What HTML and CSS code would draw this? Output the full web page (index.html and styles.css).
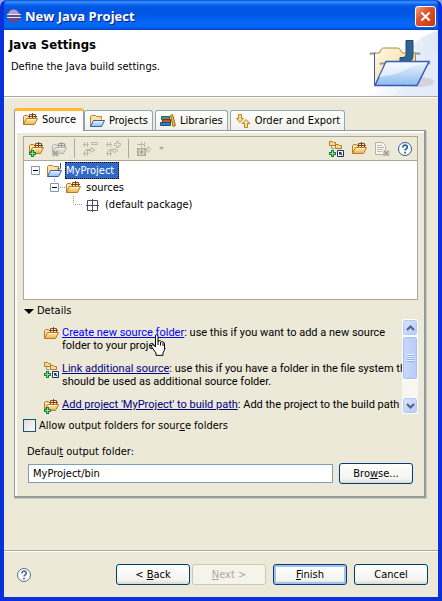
FILE: index.html
```
<!DOCTYPE html>
<html lang="en">
<head>
    <meta charset="UTF-8">
    <meta name="viewport" content="width=device-width, initial-scale=1.0">
    <title>New Java Project</title>
    <link rel="stylesheet" href="styles.css">
</head>
<body>
    <!-- Shared icons -->
    <svg class="defs" aria-hidden="true">
        <defs>
            <linearGradient id="gold" x1="0" y1="0" x2="0" y2="1">
                <stop offset="0" stop-color="#fff0c0"/>
                <stop offset="1" stop-color="#f0b040"/>
            </linearGradient>
            <linearGradient id="sky" x1="0" y1="0" x2="0" y2="1">
                <stop offset="0" stop-color="#eef6ff"/>
                <stop offset="1" stop-color="#8cbcf0"/>
            </linearGradient>
            <symbol id="i-package" viewBox="0 0 16 16">
                <path d="M1.500 12.500v-8l1-1h3l1 1h2v2" fill="#fbe3a6" stroke="#b9782a"/>
                <path d="M7.500 2.500h6v4h-6z" fill="#fbe3c0" stroke="#8a4a1c"/>
                <path d="M6 4.500h9M10.500 1v6" stroke="#7c3f10" fill="none"/>
                <path d="M1.500 12.500l3-6h11l-3 6z" fill="url(#gold)" stroke="#b9782a"/>
                <path d="M5.500 7.500h8" stroke="#fff4d0"/>
            </symbol>
            <symbol id="i-plus" viewBox="0 0 16 16">
                <path d="M3 9h3v2h2v3h-2v2h-3v-2h-2v-3h2z" fill="#16803a"/>
                <path d="M4.500 10v5M2 12.500h5" stroke="#8fe08f" fill="none"/>
            </symbol>
            <symbol id="i-package-add" viewBox="0 0 16 16">
                <use href="#i-package"/>
                <use href="#i-plus"/>
            </symbol>
            <symbol id="i-link" viewBox="0 0 16 16">
                <path d="M1.500 4.500v-4h3l1 1h2v3zM7.500 7.500v-4h3l1 1h2v3z" fill="#fbd98a" stroke="#b9782a"/>
                <path d="M3.500 5v2.500h3" stroke="#999" fill="none"/>
                <use href="#i-plus"/>
                <path d="M9.500 9.500h6v6h-6z" fill="#fff" stroke="#1c2f6b"/>
                <path d="M11 11h3l-1 1 1.500 1.500-1 1L12 13l-1 1z" fill="#1c2f6b"/>
            </symbol>
            <symbol id="i-folder" viewBox="0 0 16 16">
                <path d="M1.500 13.500v-10l1-1h4l1 1h5v3" fill="#fbe3a6" stroke="#b9862a"/>
                <path d="M1.500 13.500l3-6h11l-3 6z" fill="url(#sky)" stroke="#3a5fb0"/>
            </symbol>
            <symbol id="i-project" viewBox="0 0 16 16">
                <use href="#i-folder"/>
                <path d="M14.500 0v5q0 1-1 1h-2" stroke="#1d5c8c" fill="none"/>
            </symbol>
            <symbol id="i-help" viewBox="0 0 16 16">
                <circle cx="8" cy="8" r="6.500" fill="#fff" stroke="currentColor"/>
                <path d="M5.800 6.500q0-2.300 2.300-2.300t2.200 2q0 1-1.200 1.700-1 .6-1 1.600M8 10.800v1.700" fill="none" stroke="currentColor" stroke-width="1.700"/>
            </symbol>
        </defs>
    </svg>

    <div class="window">
        <div class="titlebar">
            <svg class="icon" viewBox="0 0 16 16">
                <circle cx="8" cy="8" r="7" fill="#5b4d8f"/>
                <path d="M2 6q2-5 6-4.500T13 6z" fill="#a79fd0"/>
                <path d="M1 6.500h14M1 9.500h14" stroke="#e8e8f8"/>
            </svg>
            <h1>New Java Project</h1>
            <button type="button" class="close" aria-label="Close">
                <svg viewBox="0 0 21 21"><path d="M6 6l9 9M15 6l-9 9" stroke="#fff" stroke-width="2.200"/></svg>
            </button>
        </div>

        <div class="banner">
            <div>
                <h2>Java Settings</h2>
                <p>Define the Java build settings.</p>
            </div>
            <svg class="banner-art" viewBox="0 0 75 66">
                <defs>
                    <linearGradient id="fade" x1="0" y1="0" x2="1" y2="0">
                        <stop offset="0" stop-color="#fff"/>
                        <stop offset="1" stop-color="#dfe7f7"/>
                    </linearGradient>
                    <linearGradient id="paper" x1="0" y1="0" x2="1" y2="1">
                        <stop offset="0" stop-color="#fffbe8"/>
                        <stop offset="1" stop-color="#efcf80"/>
                    </linearGradient>
                </defs>
                <path d="M75 1Q48 8 42 30Q36 55 0 66h75z" fill="url(#fade)"/>
                <path d="M75 22Q58 24 50 40T30 66h45z" fill="#e4ebf8" opacity=".6"/>
                <ellipse cx="56" cy="52" rx="15" ry="5" fill="#b9aebb" opacity=".4"/>
                <path d="M7 24.500l1-1h5M52 23.500h4l1 1" fill="none" stroke="#9a9a9a" stroke-width="2"/>
                <path d="M11.500 55v-32h5l2-4q1-1 2-1h14q2 0 3 2l2 3h13v14" fill="url(#paper)" stroke="#a8863c"/>
                <path d="M11.500 55v-32" stroke="#3d55a8"/>
                <path d="M43 10.500h7v15q0 6-5 6h-8v-4h3q3 0 3-3z" fill="#2f648f" stroke="#204a70"/>
                <path d="M17 34.500l1-1h5M62 33h4l1 1" fill="none" stroke="#9a9a9a" stroke-width="2"/>
                <path d="M12 55.500l11-24h43l-12 24z" fill="url(#sky)" stroke="#3a5ab8" stroke-width="1.500"/>
                <path d="M16 47l7-14h39q-12 2-20 7t-26 7z" fill="#fff" opacity=".55"/>
            </svg>
        </div>

        <div class="content">
            <div class="tabs" role="tablist">
                <button type="button" role="tab" class="tab active" aria-selected="true">
                    <svg class="icon"><use href="#i-package"/></svg>Source
                </button>
                <button type="button" role="tab" class="tab">
                    <svg class="icon"><use href="#i-folder"/></svg>Projects
                </button>
                <button type="button" role="tab" class="tab">
                    <svg class="icon" viewBox="0 0 16 16">
                        <path d="M1.500 3.500h8v3h-8z" fill="#3f9a8c" stroke="#1f6a60"/>
                        <path d="M2.500 6.500h8v3h-8z" fill="#c8502c" stroke="#8a3018"/>
                        <path d="M.5 9.500h10v3H.5z" fill="#3a7bb0" stroke="#1e4f7c"/>
                        <path d="M10.500 2.500l2-1 3 11-2.500 1z" fill="#f2b632" stroke="#a86c10"/>
                    </svg>Libraries
                </button>
                <button type="button" role="tab" class="tab">
                    <svg class="icon" viewBox="0 0 16 16">
                        <path d="M3.500 1.500h3v4h2l-3.500 4-3.500-4h2z" fill="#fbe08a" stroke="#b9822a"/>
                        <path d="M9.500 14.500h3v-4h2.500l-4-4-4 4h2.500z" fill="#fbe08a" stroke="#b9822a"/>
                    </svg>Order and Export
                </button>
            </div>

            <div class="panel">
                <div class="build-path">
                    <div class="toolbar">
                        <button type="button" aria-label="Create new source folder"><svg class="icon"><use href="#i-package-add"/></svg></button>
                        <button type="button" aria-label="Remove from build path" disabled>
                            <svg class="icon gray"><use href="#i-package"/><path d="M2 10l5 5M7 10l-5 5" stroke="#666" stroke-width="2"/></svg>
                        </button>
                        <span class="divider"></span>
                        <button type="button" aria-label="Exclude" disabled>
                            <svg class="icon" viewBox="0 0 16 16"><path d="M1 3.500h6M1 12.500h6M2.500 1v5M5.500 1v5M2.500 10v5M5.500 10v5M4 8.500h5v-2l4 2.500-4 2.500v-2H4zM9.500 1.500h6v2h-6z" fill="none" stroke="#bcb8a9"/></svg>
                        </button>
                        <button type="button" aria-label="Include" disabled>
                            <svg class="icon" viewBox="0 0 16 16"><path d="M1 3.500h6M1 12.500h6M2.500 1v5M5.500 1v5M2.500 10v5M5.500 10v5M4 8.500h5v-1l4 2-4 2.500v-2H4zM11.500.5h2v2h2v2h-2v2h-2v-2h-2v-2h2z" fill="none" stroke="#bcb8a9"/></svg>
                        </button>
                        <span class="divider"></span>
                        <button type="button" aria-label="Configure filters" disabled>
                            <svg class="icon" viewBox="0 0 16 16"><path d="M1 3.500h8M5.500 1v5M8.500 1v5M10 7.500h2v-2l3 3-3 3v-2h-2z" fill="none" stroke="#bcb8a9"/><path d="M1.500 7.500h8v7h-8z" fill="#dedbce" stroke="#aca899"/><path d="M2 8l7 6M9 8l-7 6M5.500 8v6M2 11h7" stroke="#8f8d80" stroke-dasharray="1 1"/></svg>
                        </button>
                        <button type="button" class="arrow" aria-label="Filter menu" disabled>
                            <svg viewBox="0 0 5 3"><path d="M0 0h5L2.500 3z" fill="#aca899"/></svg>
                        </button>
                        <div class="toolbar-right">
                            <button type="button" aria-label="Link source"><svg class="icon"><use href="#i-link"/></svg></button>
                            <button type="button" aria-label="Add package root"><svg class="icon"><use href="#i-package"/></svg></button>
                            <button type="button" aria-label="Edit" disabled>
                                <svg class="icon" viewBox="0 0 16 16"><path d="M1.500 1.500h7l3 3v9h-10z" fill="#f6f5f0" stroke="#b5b2a5"/><path d="M3 4.500h5M3 6.500h7M3 8.500h6M3 10.500h5" stroke="#c0bdb0"/><path d="M9 9.500h6.500v5.500H9z" fill="#c8c5b8"/><path d="M10 10l4.500 4.500M14.500 10L10 14.500" stroke="#888"/></svg>
                            </button>
                            <button type="button" class="help" aria-label="Help"><svg class="icon"><use href="#i-help"/></svg></button>
                        </div>
                    </div>

                    <ul class="tree">
                        <li>
                            <div class="row">
                                <svg class="toggle" viewBox="0 0 9 9"><path d="M.5.5h8v8h-8z" fill="#fff" stroke="#7b98b5"/><path d="M2 4.500h5" stroke="#000"/></svg>
                                <svg class="icon"><use href="#i-project"/></svg>
                                <span class="label selected">MyProject</span>
                            </div>
                            <ul>
                                <li>
                                    <div class="row">
                                        <svg class="toggle" viewBox="0 0 9 9"><path d="M4.500-4v4M10 4.500h5" stroke="#999" stroke-dasharray="1 1"/><path d="M.5.5h8v8h-8z" fill="#fff" stroke="#7b98b5"/><path d="M2 4.500h5" stroke="#000"/></svg>
                                        <svg class="icon"><use href="#i-package"/></svg>
                                        <span class="label">sources</span>
                                    </div>
                                    <ul>
                                        <li>
                                            <div class="row">
                                                <svg class="toggle" viewBox="0 0 9 9"><path d="M4.500-4v8.500H14" fill="none" stroke="#999" stroke-dasharray="1 1"/></svg>
                                                <svg class="icon" viewBox="0 0 16 16"><path d="M3.500 3.500h10v10h-10zM8.500 2v13M2 8.500h13" fill="none" stroke="#4a4f66"/></svg>
                                                <span class="label">(default package)</span>
                                            </div>
                                        </li>
                                    </ul>
                                </li>
                            </ul>
                        </li>
                    </ul>
                </div>

                <details open>
                    <summary>Details</summary>
                    <div class="hints">
                        <ul class="hint-list">
                            <li>
                                <svg class="icon"><use href="#i-package"/></svg>
                                <p><a href="#" class="hover">Create new source folder</a>: use this if you want to add a new source<br>folder to your project.</p>
                                <svg class="pointer" viewBox="0 0 14 22">
                                    <path d="M4.500 12V2q0-1.500 1-1.500t1.500 1.500v5q3-1 3.500.8 2.500-.5 3 2v5q0 2-1.500 4v2.500H5V19L.7 13q-.8-2 1-2.300 1 .2 2.800 2.300z" fill="#fff" stroke="#000"/>
                                    <path d="M7 7v4M9.500 8v3.500M12 9v3" stroke="#000"/>
                                </svg>
                            </li>
                            <li>
                                <svg class="icon"><use href="#i-link"/></svg>
                                <p><a href="#">Link additional source</a>: use this if you have a folder in the file system th<br>should be used as additional source folder.</p>
                            </li>
                            <li>
                                <svg class="icon"><use href="#i-package-add"/></svg>
                                <p><a href="#">Add project 'MyProject' to build path</a>: Add the project to the build path</p>
                            </li>
                        </ul>
                        <div class="scrollbar">
                            <button type="button" aria-label="Scroll up"><svg viewBox="0 0 9 6"><path d="M1 5l3.500-3.500L8 5" fill="none" stroke="#4d6185" stroke-width="2"/></svg></button>
                            <div class="thumb"></div>
                            <button type="button" class="down" aria-label="Scroll down"><svg viewBox="0 0 9 6"><path d="M1 1l3.500 3.500L8 1" fill="none" stroke="#4d6185" stroke-width="2"/></svg></button>
                        </div>
                    </div>
                </details>

                <div class="check">
                    <input type="checkbox" id="allow-output">
                    <label for="allow-output">Allow output folders for sour<u>c</u>e folders</label>
                </div>

                <label class="output-label" for="output">Defaul<u>t</u> output folder:</label>
                <div class="output">
                    <input type="text" id="output" value="MyProject/bin">
                    <button type="button" class="btn">Bro<u>w</u>se...</button>
                </div>
            </div>
        </div>

        <div class="footer">
            <button type="button" class="help" aria-label="Help"><svg class="icon"><use href="#i-help"/></svg></button>
            <div class="nav">
                <button type="button" class="btn">&lt; <u>B</u>ack</button>
                <button type="button" class="btn" disabled><u>N</u>ext &gt;</button>
            </div>
            <button type="button" class="btn default"><u>F</u>inish</button>
            <button type="button" class="btn">Cancel</button>
        </div>
    </div>
</body>
</html>
```
FILE: styles.css
```
* { box-sizing: border-box; }
body { margin: 0; background: #8fa6e0; font: 11px/13px "DejaVu Sans Condensed", "DejaVu Sans", sans-serif; font-stretch: condensed; color: #000; }
h1, h2, p, ul { margin: 0; padding: 0; }
ul { list-style: none; }
button, input { font: inherit; color: inherit; }
button { padding: 0; border: none; background: none; }
svg { display: block; flex: none; }
.defs { position: absolute; width: 0; height: 0; }
.icon { width: 16px; height: 16px; }

.window { min-height: 100vh; display: flex; flex-direction: column; border: solid #0831d9; border-width: 0 4px 4px; border-radius: 7px 7px 0 0; background: #0054e3; overflow: hidden; }

/* Title bar */
.titlebar { height: 30px; margin: 0 -4px; padding: 2px 6px 0; display: flex; align-items: center; gap: 3px; background: linear-gradient(#0a4fd8 0, #3a90ff 2px, #0560ea 5px, #0054e0 9px, #0058e6 16px, #0468fa 23px, #0564f2 27px, #0042c8 30px); }
.titlebar h1 { flex: 1; font: bold 13px/16px "Open Sans", "Noto Sans", sans-serif; color: #fff; text-shadow: 1px 1px 0 #0b1d80; }
.close { width: 21px; height: 21px; border: 1px solid #fff; border-radius: 3px; background: linear-gradient(135deg, #f0a088, #e0502c 40%, #c83810); }
.close svg { width: 19px; height: 19px; }

/* Banner */
.banner { height: 67px; display: flex; justify-content: space-between; background: #fff; border-bottom: 1px solid #aca899; padding-left: 5px; }
.banner h2 { font-size: 13px; line-height: 16px; padding-top: 7px; }
.banner p { padding: 7px 0 0 2px; }
.banner-art { width: 75px; height: 66px; }

/* Body */
.content { flex: 1; display: flex; flex-direction: column; padding: 10px 12px 52px 10px; background: #ece9d8; border-top: 1px solid #fff; }
.tabs { display: flex; align-items: flex-end; gap: 2px; height: 22px; }
.tab { height: 20px; display: flex; align-items: center; gap: 4px; padding: 0 4px; white-space: nowrap; border: 1px solid #91a7b4; border-bottom: none; border-radius: 3px 3px 0 0; background: linear-gradient(#fff, #f0f0ea); }
.tab.active { height: 23px; margin: 0 -2px -1px 0; padding: 0 7px 3px; border-color: #919b9c; border-top: 3px solid #ffb834; background: #fcfcfe; position: relative; }

.panel { flex: 1; display: flex; flex-direction: column; padding: 5px 6px 12px; border: 1px solid #919b9c; border-width: 1px 2px 2px 1px; background: #ece9d8; box-shadow: inset 2px 2px 0 #fff, 1px 1px 0 #d0cdbf; }
.build-path { flex: 1; display: flex; flex-direction: column; margin-left: 2px; border: 1px solid #aca899; }
.toolbar { height: 24px; display: flex; align-items: center; gap: 7px; padding: 0 4px; border-bottom: 1px solid #aca899; }
.toolbar-right { margin-left: auto; display: flex; gap: 7px; }
.divider { width: 1px; height: 19px; background: #aca899; }
.arrow svg { width: 5px; height: 3px; }
.gray { filter: grayscale(1); opacity: .5; }
.help { color: #2c5c94; }

.tree { flex: 1; min-height: 138px; padding: 1px 0 0 7px; background: #fff; }
.tree ul { padding-left: 19px; }
.row { height: 17px; display: flex; align-items: center; }
.row .icon { margin: 0 3px 0 6px; }
.toggle { width: 9px; height: 9px; overflow: visible; }
.label { padding: 2px; }
.selected { padding: 2px 5px 2px 1px; background: #316ac5; color: #fff; outline: 1px dotted #000; outline-offset: -1px; }

/* Details */
summary { padding: 4px 0 2px 16px; list-style: none; position: relative; }
summary::before { content: ""; position: absolute; left: 3px; top: 9px; border: solid transparent; border-width: 5px 5px 0; border-top-color: #000; }
.hints { height: 95px; margin-left: 2px; display: flex; }
.hint-list { flex: 1; min-width: 0; overflow: hidden; padding: 7px 0 0 20px; display: flex; flex-direction: column; gap: 10px; font-family: Roboto, "Liberation Sans", sans-serif; font-stretch: normal; }
.hint-list li { display: flex; gap: 3px; position: relative; white-space: nowrap; }
.pointer { position: absolute; left: 108px; top: 8px; width: 14px; height: 22px; }
a { color: #000080; }
a.hover { color: #0000ff; }
.scrollbar { width: 16px; display: flex; flex-direction: column; background: #f7f6f1; }
.scrollbar button { height: 17px; display: flex; align-items: center; justify-content: center; border: 1px solid #fff; border-radius: 3px; background: linear-gradient(135deg, #dce6fd, #b5c8f7); box-shadow: inset 0 0 0 1px #b4c8f6; }
.scrollbar svg { width: 9px; height: 6px; }
.scrollbar .down { margin-top: auto; }
.thumb { height: 44px; border: 1px solid #fff; border-radius: 3px; box-shadow: inset 0 0 0 1px #a9bff0; background: repeating-linear-gradient(#eef4fe 0 1px, #8cb0f8 1px 2px) center / 7px 8px no-repeat, linear-gradient(90deg, #c9d8fc, #b9cbf8); }

.check { display: flex; align-items: center; gap: 3px; margin: 5px 0 0 2px; }
.check input { appearance: none; width: 13px; height: 13px; margin: 0; border: 1px solid #1c5180; background: linear-gradient(135deg, #dcdcd7, #fff); }
.output-label { margin: 13px 0 0 6px; }
.output { display: flex; align-items: center; gap: 6px; margin: 5px 5px 0 7px; }
.output input { flex: 1; min-width: 0; height: 19px; padding: 0 4px; border: 1px solid #7f9db9; background: #fff; }

.btn { width: 74px; height: 21px; border: 1px solid #003c74; border-radius: 3px; background: linear-gradient(#fff, #f3f3ef 80%, #dcd8cc); }
.btn.default { box-shadow: inset 0 0 0 2px #a6c0f0; }
.btn:disabled { color: #aca899; border-color: #c9c7ba; background: #f5f4ea; }

/* Footer */
.footer { display: flex; align-items: center; gap: 7px; padding: 13px 10px 12px 12px; background: #ece9d8; border-top: 1px solid #aca899; box-shadow: inset 0 1px 0 #fff; }
.footer .help { margin-right: auto; color: #56708c; }
.nav { display: flex; gap: 2px; }
```
